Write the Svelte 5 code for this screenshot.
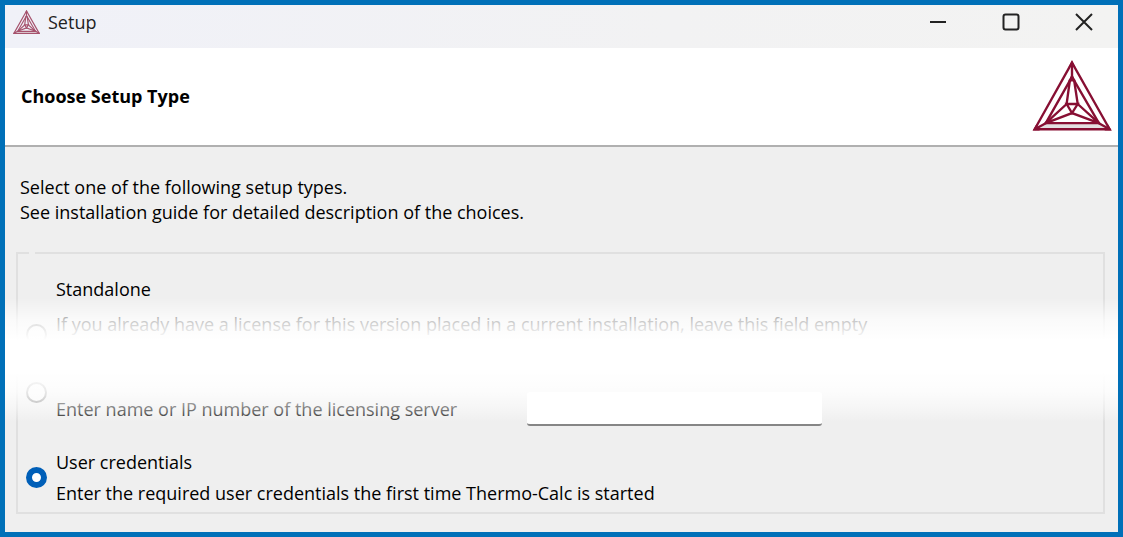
<script lang="ts">
    let setupType = $state("user");
    let server = $state("");
</script>

{#snippet logo()}
    <svg viewBox="396 180 238 212" aria-hidden="true">
        <path class="band" d="M437 369H595L622 385H409Z" />
        <path d="M515 188L404 386H627Z" />
        <path d="M515 230L437 368H595Z" />
        <path d="M515 188V230M404 386L437 368M627 386L595 368" />
        <path d="M509 238L499 311L437 368L515 338L595 368L532 311L521 238" />
        <path d="M499 311H532L515 338Z" />
        <path class="node" d="M515 181L525 201H505ZM515 220L526 244H504Z" />
        <path class="node" d="M398 390L409 371L419 390ZM633 390L622 371L612 390Z" />
        <path class="node" d="M428 372L445 354L456 368ZM604 372L587 354L576 368Z" />
    </svg>
{/snippet}

<div class="window">
    <header class="title-bar">
        <span class="title-icon">{@render logo()}</span>
        <span class="title">Setup</span>
        <div class="controls">
            <button aria-label="Minimize">
                <svg viewBox="0 0 18 18"><path d="M1 9H17" /></svg>
            </button>
            <button aria-label="Maximize">
                <svg viewBox="0 0 18 18"
                    ><rect x="1.5" y="1.5" width="15" height="15" rx="2" /></svg
                >
            </button>
            <button aria-label="Close">
                <svg viewBox="0 0 18 18"><path d="M1 1L17 17M17 1L1 17" /></svg>
            </button>
        </div>
    </header>

    <div class="banner">
        <h1>Choose Setup Type</h1>
        <span class="banner-logo">{@render logo()}</span>
    </div>

    <main>
        <p>
            Select one of the following setup types.<br />
            See installation guide for detailed description of the choices.
        </p>

        <fieldset aria-label="Setup type">
            <legend></legend>

            <div class="option standalone">
                <input
                    type="radio"
                    id="standalone"
                    value="standalone"
                    bind:group={setupType}
                />
                <div class="text">
                    <label for="standalone">Standalone</label>
                    <span class="hint"
                        >If you already have a license for this version placed
                        in a current installation, leave this field empty</span
                    >
                </div>
            </div>

            <div class="option network">
                <input
                    type="radio"
                    aria-label="Network"
                    value="network"
                    bind:group={setupType}
                />
                <div class="server">
                    <label for="server"
                        >Enter name or IP number of the licensing server</label
                    >
                    <input type="text" id="server" bind:value={server} />
                </div>
            </div>

            <div class="option user">
                <input
                    type="radio"
                    id="user"
                    value="user"
                    bind:group={setupType}
                />
                <div class="text">
                    <label for="user">User credentials</label>
                    <span
                        >Enter the required user credentials the first time
                        Thermo-Calc is started</span
                    >
                </div>
            </div>
        </fieldset>

        <div class="fade"></div>
    </main>
</div>

<style>
    .window {
        display: flex;
        flex-direction: column;
        box-sizing: border-box;
        min-height: 100vh;
        border: 5px solid #0070b8;
        background-color: #efefef;
        color: #000;
        font-family: "Open Sans", "Noto Sans", sans-serif;
        font-size: 18px;
        line-height: 24px;
    }

    .title-bar {
        display: flex;
        align-items: center;
        height: 43px;
        padding: 0 10px 9px 8px;
        box-sizing: border-box;
        background: linear-gradient(90deg, #f0f1f8, #f2f2f3 60%, #f3f3f2);
    }

    .title {
        color: #222;
    }

    svg {
        display: block;
        width: 100%;
        fill: none;
        stroke: #870f33;
        stroke-width: 7;
    }

    .band {
        fill: #e4dfe1;
        stroke: none;
    }

    .node {
        fill: #870f33;
        stroke: none;
    }

    .title-icon {
        width: 27px;
        margin-right: 8px;
        opacity: 0.7;
    }

    .title-icon svg {
        stroke-width: 10;
    }

    .controls {
        display: flex;
        gap: 25px;
        margin-left: auto;
    }

    .controls button {
        display: flex;
        align-items: center;
        justify-content: center;
        width: 48px;
        height: 34px;
        padding: 0;
        border: none;
        background: none;
    }

    .controls svg {
        width: 18px;
        stroke: #222;
        stroke-width: 2;
    }

    .banner {
        display: flex;
        align-items: center;
        justify-content: space-between;
        box-sizing: border-box;
        height: 99px;
        padding: 0 6px 2px 16px;
        background-color: #fff;
        border-bottom: 2px solid #b0b0b0;
    }

    h1 {
        margin: 0;
        font-size: 18px;
        font-weight: 700;
    }

    .banner-logo {
        width: 80px;
    }

    main {
        position: relative;
        flex: 1;
        padding: 28px 13px 17px 11px;
    }

    p {
        margin: 0 4px 27px;
        line-height: 25px;
    }

    fieldset {
        min-width: 0;
        margin: 0;
        padding: 23px 8px 7px;
        border: 2px solid #e0e0e0;
    }

    legend {
        width: 6px;
        height: 2px;
        margin-left: 3px;
        padding: 0;
    }

    .option {
        display: grid;
        grid-template-columns: 21px 1fr;
        column-gap: 9px;
    }

    .text {
        display: flex;
        flex-direction: column;
    }

    .standalone {
        align-items: end;
        margin-bottom: 37px;
    }

    .standalone .text {
        gap: 11px;
        padding-bottom: 9px;
    }

    .network {
        align-items: start;
        margin-bottom: 24px;
    }

    .hint {
        color: #444;
    }

    .server {
        display: grid;
        grid-template-columns: minmax(0, 471px) minmax(0, 295px);
        align-items: center;
        padding-top: 10px;
        color: #222;
    }

    .user {
        align-items: center;
    }

    .user .text {
        gap: 7px;
    }

    input[type="radio"] {
        appearance: none;
        box-sizing: border-box;
        width: 21px;
        height: 21px;
        margin: 0;
        border: 2px solid #8a8a8a;
        border-radius: 50%;
        background-color: #f6f6f6;
    }

    input[type="radio"]:checked {
        border: 6px solid #005fb8;
        background-color: #fff;
    }

    input[type="text"] {
        box-sizing: border-box;
        width: 100%;
        height: 34px;
        padding: 0 8px;
        border: none;
        border-bottom: 2px solid #868686;
        border-radius: 3px;
        background-color: #fff;
        font: inherit;
    }

    .fade {
        position: absolute;
        top: 151px;
        left: 0;
        right: 0;
        height: 124px;
        background: linear-gradient(
            rgba(255, 255, 255, 0),
            rgba(255, 255, 255, 0.7) 18%,
            #fff 34%,
            #fff 60%,
            rgba(255, 255, 255, 0.8) 76%,
            rgba(255, 255, 255, 0.4) 90%,
            rgba(255, 255, 255, 0)
        );
        pointer-events: none;
    }
</style>
